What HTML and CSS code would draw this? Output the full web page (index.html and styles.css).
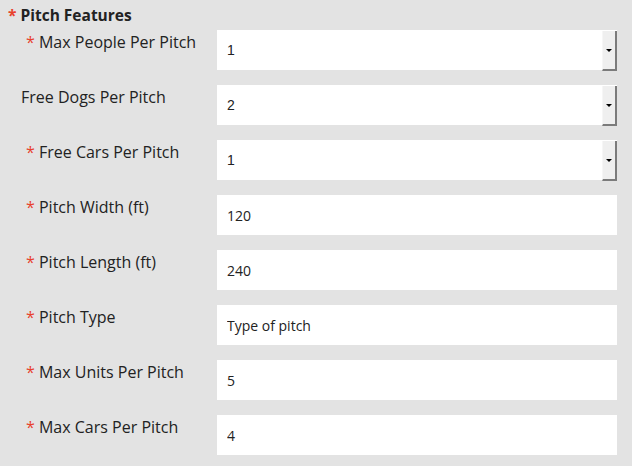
FILE: index.html
```html
<!DOCTYPE html>
<html>
<head>
<meta charset="utf-8">
<link rel="stylesheet" href="styles.css">
</head>
<body>
<div class="panel">
  <h3 class="heading"><span class="req">*</span> Pitch Features</h3>
  <div class="rows">
    <label class="label req-label"><span class="req">*</span> Max People Per Pitch</label>
    <div class="select-wrap">
      <select class="select"><option>1</option></select>
      <span class="select-btn"><span class="arrow"></span></span>
    </div>

    <label class="label">Free Dogs Per Pitch</label>
    <div class="select-wrap">
      <select class="select"><option>2</option></select>
      <span class="select-btn"><span class="arrow"></span></span>
    </div>

    <label class="label req-label"><span class="req">*</span> Free Cars Per Pitch</label>
    <div class="select-wrap">
      <select class="select"><option>1</option></select>
      <span class="select-btn"><span class="arrow"></span></span>
    </div>

    <label class="label req-label"><span class="req">*</span> Pitch Width (ft)</label>
    <input class="input" type="text" value="120">

    <label class="label req-label"><span class="req">*</span> Pitch Length (ft)</label>
    <input class="input" type="text" value="240">

    <label class="label req-label"><span class="req">*</span> Pitch Type</label>
    <input class="input" type="text" value="Type of pitch">

    <label class="label req-label"><span class="req">*</span> Max Units Per Pitch</label>
    <input class="input" type="text" value="5">

    <label class="label req-label"><span class="req">*</span> Max Cars Per Pitch</label>
    <input class="input" type="text" value="4">
  </div>
</div>
</body>
</html>
```
FILE: styles.css
```css
html, body {
  margin: 0;
  padding: 0;
  background: #ffffff;
}

.panel {
  width: 632px;
  height: 466px;
  box-sizing: border-box;
  background: #e3e3e3;
  padding: 4px 0 0 8px;
  font-family: "Open Sans", "Liberation Sans", sans-serif;
  color: #222222;
}

.heading {
  margin: 0;
  font-size: 15.5px;
  font-weight: bold;
  line-height: 22px;
}

.req {
  color: #e8412c;
}

.rows {
  display: grid;
  grid-template-columns: 196px 400px;
  row-gap: 15px;
  margin-top: 4px;
  padding-left: 13px;
}

.label {
  font-size: 16px;
  line-height: 20px;
  padding-top: 2px;
}

.req-label {
  padding-left: 5px;
}

.select-wrap {
  display: flex;
  height: 40px;
  background: #ffffff;
}

.select {
  flex: 1;
  -webkit-appearance: none;
  appearance: none;
  border: 0;
  outline: 0;
  background: #ffffff;
  margin: 0;
  padding: 0 0 0 10px;
  height: 40px;
  font-family: "Liberation Sans", Arial, sans-serif;
  font-size: 14px;
  color: #222222;
}

.select-btn {
  width: 12px;
  margin-top: 1px;
  height: 38px;
  background: #efefef;
  border-right: 2px solid #7b7b7b;
  border-bottom: 2px solid #7b7b7b;
  border-left: 1px solid #f6f6f6;
  display: flex;
  align-items: center;
  justify-content: center;
}

.arrow {
  width: 0;
  height: 0;
  border-left: 3px solid transparent;
  border-right: 3px solid transparent;
  border-top: 3px solid #000000;
}

.input {
  height: 40px;
  box-sizing: border-box;
  border: 0;
  outline: 0;
  margin: 0;
  padding: 0 10px;
  background: #ffffff;
  font-family: "Open Sans", "Liberation Sans", sans-serif;
  font-size: 14px;
  color: #222222;
}
```
